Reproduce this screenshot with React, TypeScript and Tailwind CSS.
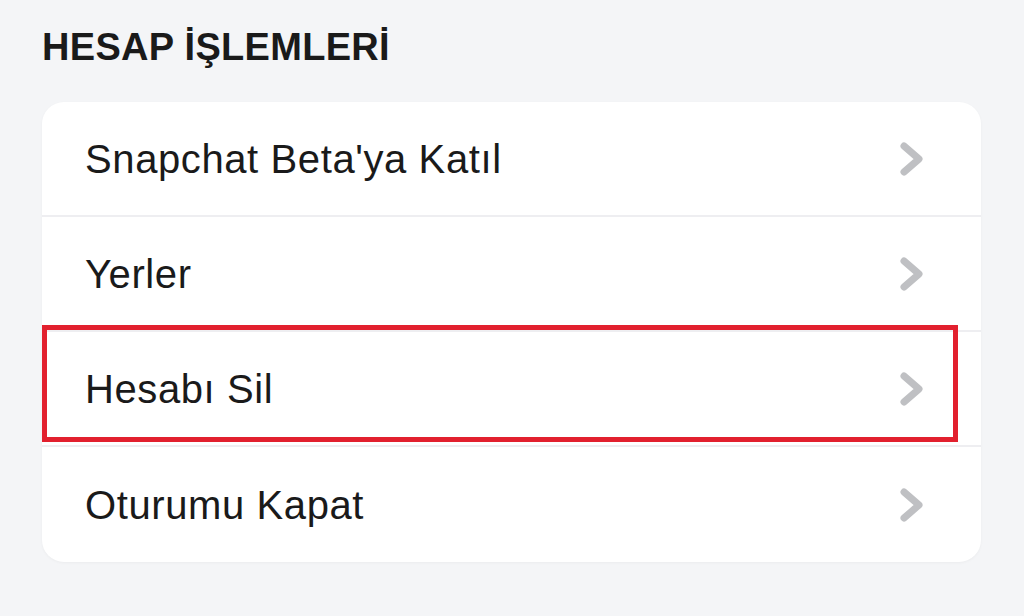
import React from 'react'

const rows = ["Snapchat Beta'ya Katıl", 'Yerler', 'Hesabı Sil', 'Oturumu Kapat']

const Chevron = () => (
  <svg width="26" height="36" viewBox="0 0 26 36" fill="none">
    <path d="M5 5 L20 18 L5 31" stroke="#bfc0c3" strokeWidth="7" strokeLinecap="round" strokeLinejoin="round" />
  </svg>
)

const App = () => {
  return (
    <div className="w-[1024px] h-[616px] bg-[#f4f5f7] px-[42px] pt-[28px] font-['Liberation_Sans',Arial,sans-serif] text-[#1a1a1a]">
      <h2 className="text-[38px] font-bold leading-none tracking-[0.3px]">HESAP İŞLEMLERİ</h2>
      <div className="relative mt-[36px] w-[939px] bg-white rounded-[22px] shadow-[0_1px_3px_rgba(0,0,0,0.04)]">
        {rows.map((label, i) => (
          <div
            key={label}
            className={`flex items-center justify-between h-[115px] pl-[43px] pr-[56px] ${i < rows.length - 1 ? 'border-b-2 border-[#eeeef1]' : ''}`}
          >
            <span className="text-[40px] leading-none tracking-[0.6px]">{label}</span>
            <Chevron />
          </div>
        ))}
        <div className="absolute left-0 top-[223px] w-[916px] h-[117px] border-[5px] border-[#e2202e]" />
      </div>
    </div>
  )
}

export default App
